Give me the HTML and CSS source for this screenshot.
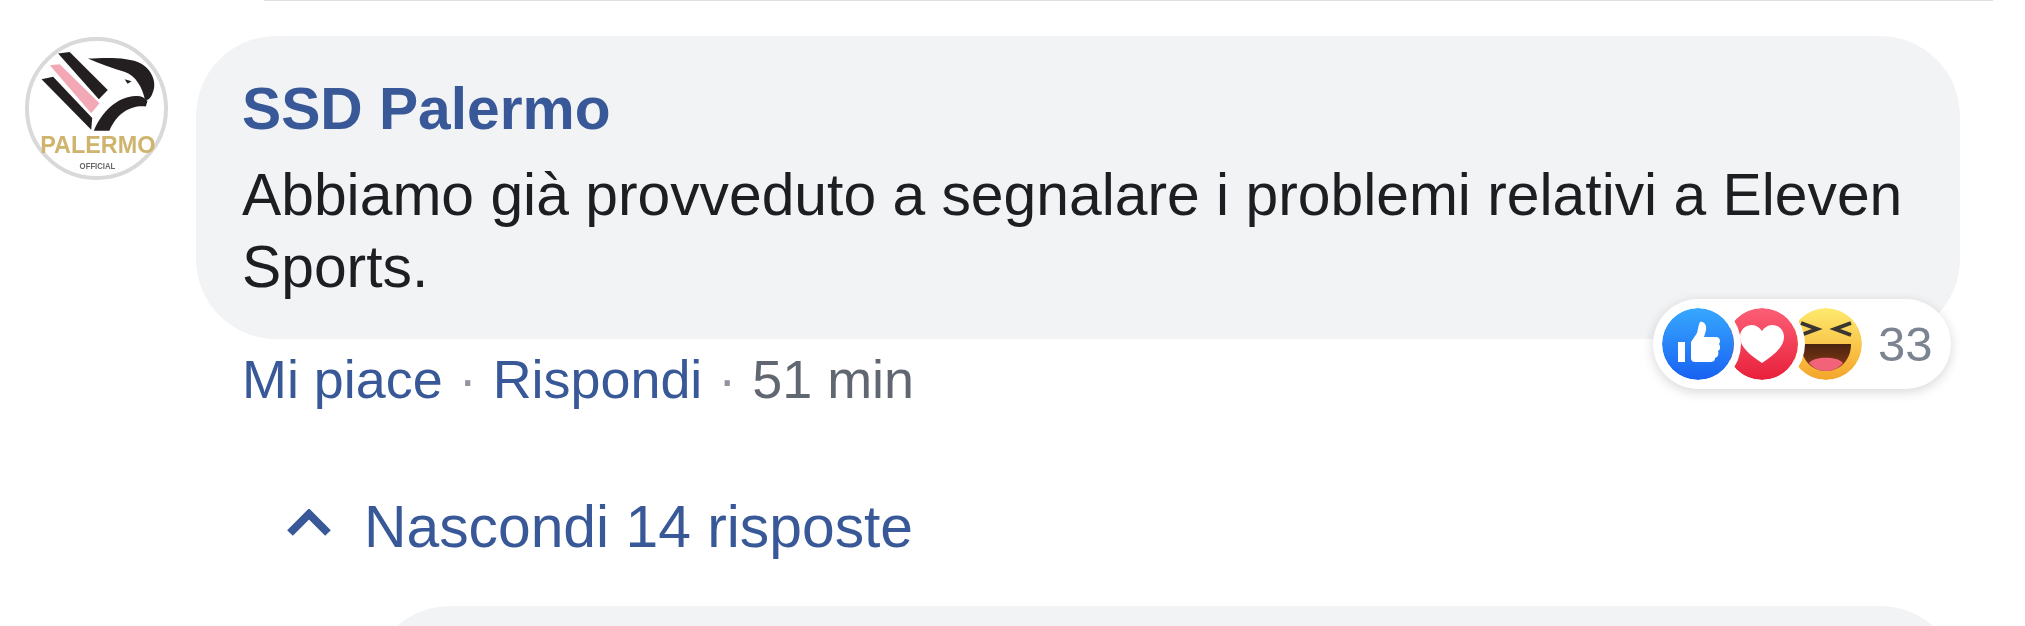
FILE: index.html
```html
<!DOCTYPE html>
<html lang="it">
<head>
<meta charset="utf-8">
<title>Commento</title>
<link rel="stylesheet" href="styles.css">
</head>
<body>
<div class="page">
  <div class="rule"></div>
  <div class="comment">
    <svg class="avatar" viewBox="75 110 432 432" aria-label="Palermo">
      <circle cx="291" cy="326" r="210" fill="#fff" stroke="#d9d9d9" stroke-width="12"/>
      <path d="M175 160L210 155L325 270L298 298Z" fill="#231f20"/>
      <path d="M150 195L180 192L300 310L275 340Z" fill="#f3a9b5"/>
      <path d="M125 238L160 230L278 355L275 390Z" fill="#231f20"/>
      <path d="M265 175C320 172 390 170 425 190C460 210 475 250 460 280C455 295 445 305 437 298C430 265 410 225 375 215C340 205 300 190 265 175Z" fill="#231f20"/>
      <path d="M283 393C305 340 350 290 410 288C425 287 437 293 445 303L440 320C400 315 355 335 330 393Z" fill="#231f20"/>
      <path d="M376 238L397 244L385 251Z" fill="#231f20"/>
      <text class="logo-name" x="121" y="460" textLength="348" lengthAdjust="spacingAndGlyphs">PALERMO</text>
      <text class="logo-sub" x="240" y="510" textLength="108" lengthAdjust="spacingAndGlyphs">OFFICIAL</text>
    </svg>
    <div class="body">
      <div class="bubble">
        <a class="author">SSD Palermo</a>
        <p class="message">Abbiamo già provveduto a segnalare i problemi relativi a Eleven Sports.</p>
        <div class="reactions">
          <svg class="react like" viewBox="0 0 72 72">
            <defs><linearGradient id="gl" x1="0" y1="0" x2="0" y2="1"><stop offset="0" stop-color="#37a8ff"/><stop offset="1" stop-color="#1861f2"/></linearGradient></defs>
            <circle cx="36" cy="36" r="36" fill="url(#gl)"/>
            <path d="M16 34H23V54H16ZM29 34L35 25C36 22 36 18 38 14C42 13 45 17 44 22L42 29H54C58 29 59 33 57 36C59 39 58 42 56 43C57 46 56 49 53 50C53 53 51 54 48 54H33C30 54 29 52 29 50Z" fill="#fff"/>
          </svg>
          <svg class="react love" viewBox="0 0 72 72">
            <defs><linearGradient id="gh" x1="0" y1="0" x2="0" y2="1"><stop offset="0" stop-color="#fc5f76"/><stop offset="1" stop-color="#e81f3a"/></linearGradient></defs>
            <circle cx="36" cy="36" r="36" fill="url(#gh)"/>
            <path d="M36 55C24 47 14 39 14 29C14 21 20 17 26 17C30 17 34 20 36 23C38 20 42 17 46 17C52 17 58 21 58 29C58 39 48 47 36 55Z" fill="#fff"/>
          </svg>
          <svg class="react haha" viewBox="0 0 72 72">
            <defs>
              <linearGradient id="gy" x1="0" y1="0" x2="0" y2="1"><stop offset="0" stop-color="#feea6e"/><stop offset="1" stop-color="#f4a52a"/></linearGradient>
              <linearGradient id="gm" x1="0" y1="0" x2="0" y2="1"><stop offset="0" stop-color="#4a2410"/><stop offset="1" stop-color="#8a3a14"/></linearGradient>
            </defs>
            <circle cx="36" cy="36" r="36" fill="url(#gy)"/>
            <path d="M11 15L27 21L11 27" fill="none" stroke="#3a3532" stroke-width="4"/>
            <path d="M61 15L45 21L61 27" fill="none" stroke="#3a3532" stroke-width="4"/>
            <path d="M11 36H61C61 52 50 63 36 63C22 63 11 52 11 36Z" fill="url(#gm)"/>
            <path d="M19 55C24 48 48 48 53 55C49 60 43 63 36 63C29 63 23 60 19 55Z" fill="#f2637a"/>
          </svg>
          <span class="count">33</span>
        </div>
      </div>
      <div class="actions">
        <a>Mi piace</a><span class="dot">·</span><a>Rispondi</a><span class="dot">·</span><span class="time">51 min</span>
      </div>
    </div>
  </div>
  <div class="replies-toggle">
    <svg class="chevron" viewBox="0 0 46 28"><path d="M4 24L23 5L42 24" fill="none" stroke="#385898" stroke-width="8"/></svg>
    <a>Nascondi 14 risposte</a>
  </div>
  <div class="reply-bubble"></div>
</div>
</body>
</html>
```

FILE: styles.css
```css
html, body {
  margin: 0;
  padding: 0;
  background: #fff;
}

.page {
  width: 2025px;
  height: 626px;
  overflow: hidden;
  font-family: "Liberation Sans", Arial, sans-serif;
}

.rule {
  height: 1px;
  margin: 0 32px 0 264px;
  background: #dddfe2;
}

.comment {
  display: flex;
  align-items: flex-start;
  gap: 28px;
  margin: 35px 0 0 25px;
}

.avatar {
  flex: none;
  width: 143px;
  height: 143px;
  margin-top: 1px;
  filter: blur(0.5px);
}

.logo-name {
  font: bold 74px "Liberation Sans", sans-serif;
  fill: #cfb46e;
}

.logo-sub {
  font: bold 26px "Liberation Sans", sans-serif;
  fill: #666;
}

.body {
  width: 1764px;
}

.bubble {
  position: relative;
  box-sizing: border-box;
  height: 303px;
  padding: 41px 46px 0;
  background: #f2f3f5;
  border-radius: 80px;
}

.author {
  display: block;
  font-size: 58.7px;
  font-weight: bold;
  line-height: 64px;
  color: #385898;
}

.message {
  margin: 18px 0 0;
  font-size: 58.8px;
  line-height: 72px;
  color: #1c1e21;
}

.reactions {
  position: absolute;
  right: 9px;
  bottom: -50px;
  display: flex;
  align-items: center;
  box-sizing: border-box;
  width: 298px;
  height: 90px;
  padding-left: 9px;
  background: #fff;
  border-radius: 45px;
  box-shadow: 0 3px 12px rgba(0, 0, 0, 0.16);
}

.react {
  position: relative;
  flex: none;
  width: 72px;
  height: 72px;
  margin-right: -8px;
  border-radius: 50%;
  box-shadow: 0 0 0 7px #fff;
}

.like { z-index: 3; }
.love { z-index: 2; }
.haha { z-index: 1; box-shadow: none; }

.count {
  margin-left: 24px;
  font-size: 49px;
  color: #7b8490;
}

.actions {
  margin-top: 12px;
  margin-left: 46px;
  font-size: 53.9px;
  line-height: 56px;
  color: #385898;
}

.dot {
  margin: 0 16px;
  color: #90949c;
}

.time {
  color: #606770;
}

.replies-toggle {
  display: flex;
  align-items: center;
  gap: 32px;
  margin: 88px 0 0 286px;
  font-size: 58.8px;
  line-height: 64px;
  color: #385898;
}

.chevron {
  flex: none;
  width: 46px;
  height: 28px;
  margin-top: -8px;
}

.reply-bubble {
  height: 200px;
  margin: 47px 65px 0 370px;
  background: #f2f3f5;
  border-radius: 80px;
}
```
